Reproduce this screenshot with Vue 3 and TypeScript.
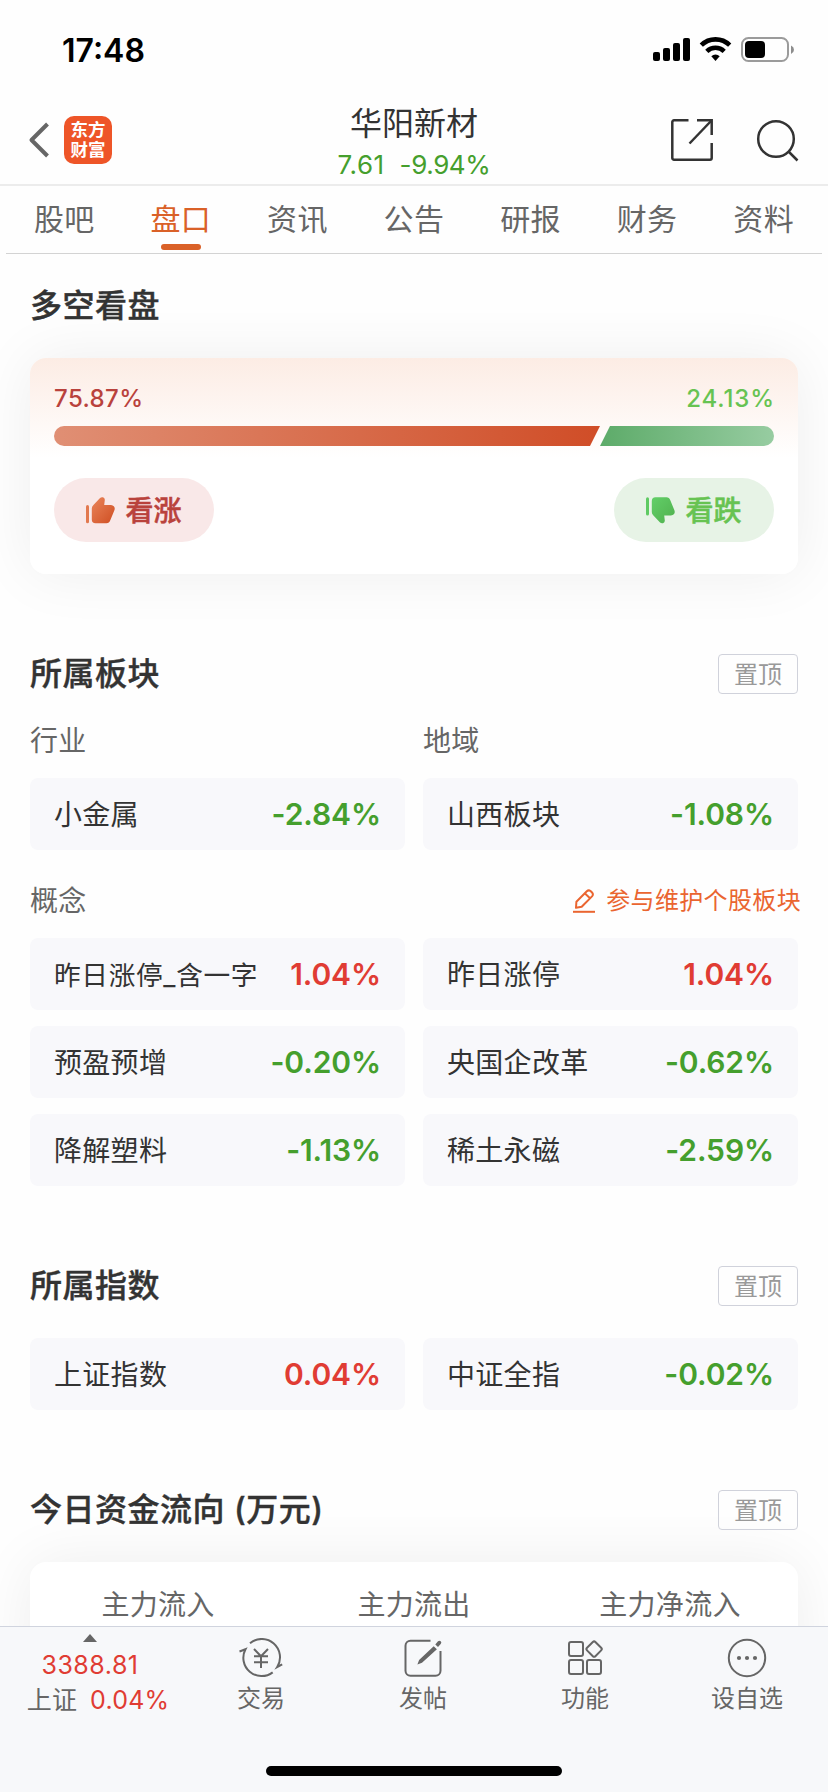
<script setup lang="ts">
import { ref } from 'vue'

interface Quote {
  name: string
  change: string
  small?: boolean
}

const tabs: string[] = ['股吧', '盘口', '资讯', '公告', '研报', '财务', '资料']
const activeTab = ref('盘口')

const industry: Quote[] = [
  { name: '小金属', change: '-2.84%' },
  { name: '山西板块', change: '-1.08%' },
]
const concepts: Quote[] = [
  { name: '昨日涨停_含一字', change: '1.04%', small: true },
  { name: '昨日涨停', change: '1.04%' },
  { name: '预盈预增', change: '-0.20%' },
  { name: '央国企改革', change: '-0.62%' },
  { name: '降解塑料', change: '-1.13%' },
  { name: '稀土永磁', change: '-2.59%' },
]
const indices: Quote[] = [
  { name: '上证指数', change: '0.04%' },
  { name: '中证全指', change: '-0.02%' },
]
const flows: string[] = ['主力流入', '主力流出', '主力净流入']

const tone = (change: string): string => (change.startsWith('-') ? 'down' : 'up')
</script>

<template>
  <div class="screen">
    <div class="status">
      <span class="time">17:48</span>
      <svg class="status-icons" width="144" height="28" viewBox="652 36 144 28">
        <rect x="653" y="52" width="7" height="9" rx="2" />
        <rect x="663" y="48" width="7" height="13" rx="2" />
        <rect x="673" y="43" width="7" height="18" rx="2" />
        <rect x="683" y="38" width="7" height="23" rx="2" />
        <g fill="none" stroke="#000" stroke-width="4.6">
          <path d="M701.3 45.2a20.3 20.3 0 0 1 28.4 0" />
          <path d="M706.8 51.3a12.6 12.6 0 0 1 17.4 0" />
        </g>
        <path d="M711.3 56.2a6.2 6.2 0 0 1 8.4 0l-4.2 4.9z" />
        <rect x="742" y="38" width="46" height="23" rx="6.5" fill="none" stroke="#9b9b9b" stroke-width="2" />
        <rect x="745" y="41" width="20" height="17" rx="4" />
        <path d="M791 45.5q3 1.500 3 4.200t-3 4.200z" fill="#8d8d8d" />
      </svg>
    </div>

    <header class="nav">
      <div class="nav-side">
        <svg width="22" height="38" viewBox="0 0 22 38" fill="none" stroke="#666" stroke-width="4">
          <path d="M19.500 3L3.500 19l16 16" stroke-linejoin="round" />
        </svg>
        <div class="logo"><span>东方</span><span>财富</span></div>
      </div>
      <div class="nav-title">
        <div class="stock">华阳新材</div>
        <div class="price"><span>7.61</span><span class="price-change">-9.94%</span></div>
      </div>
      <div class="nav-side nav-right">
        <svg width="44" height="44" viewBox="0 0 44 44" fill="none" stroke="#333" stroke-width="2.500">
          <path d="M18.500 2.300H4a1.700 1.700 0 0 0-1.700 1.700v36A1.700 1.700 0 0 0 4 41.700h36a1.700 1.700 0 0 0 1.700-1.700V25M27 2.300h14.700V17" />
          <path d="M19.500 25.500L41.500 2.500" />
        </svg>
        <svg width="44" height="44" viewBox="0 0 44 44" fill="none" stroke="#333" stroke-width="2.500">
          <circle cx="21" cy="21" r="17.800" />
          <path d="M33.500 33.500l9 9" />
        </svg>
      </div>
    </header>

    <nav class="tabs">
      <button
        v-for="tab in tabs"
        :key="tab"
        class="tab"
        :class="{ active: tab === activeTab }"
        @click="activeTab = tab"
      >
        {{ tab }}
      </button>
    </nav>

    <main class="content">
      <section class="sentiment">
        <h2>多空看盘</h2>
        <div class="card vote">
          <div class="row shares">
            <span class="bull">75.87%</span>
            <span class="bear">24.13%</span>
          </div>
          <div class="bar"><i class="bar-bull"></i><i class="bar-bear"></i></div>
          <div class="row">
            <button class="pill pill-bull">
              <svg width="29" height="27" viewBox="0 0 29 27">
                <defs>
                  <linearGradient id="gUp" x1="0" y1="0" x2="1" y2="1">
                    <stop offset="0" stop-color="#ea855b" /><stop offset="1" stop-color="#cf4e22" />
                  </linearGradient>
                </defs>
                <rect x="0" y="8" width="3" height="18.300" rx="1.500" fill="#e2794f" />
                <path d="M5.800 11.500Q5.800 9.600 7.200 8.200L13.800 1.300Q15.200-.2 17 .3 19 1 18.800 3L18.200 8H25Q30 9 28.300 13.500L24.400 23Q23.200 26.300 20.500 26.300H9.500Q5.800 26.300 5.800 22.500Z" fill="url(#gUp)" />
              </svg>
              <span>看涨</span>
            </button>
            <button class="pill pill-bear">
              <svg width="29" height="27" viewBox="0 0 29 27">
                <defs>
                  <linearGradient id="gDown" x1="0" y1="1" x2="1" y2="0">
                    <stop offset="0" stop-color="#62cf68" /><stop offset="1" stop-color="#50b04e" />
                  </linearGradient>
                </defs>
                <g transform="matrix(1 0 0 -1 0 26.500)">
                  <rect x="0" y="8" width="3" height="18.300" rx="1.500" fill="#5fca63" />
                  <path d="M5.800 11.500Q5.800 9.600 7.200 8.200L13.800 1.300Q15.200-.2 17 .3 19 1 18.800 3L18.200 8H25Q30 9 28.300 13.500L24.400 23Q23.200 26.300 20.500 26.300H9.500Q5.800 26.300 5.800 22.500Z" fill="url(#gDown)" />
                </g>
              </svg>
              <span>看跌</span>
            </button>
          </div>
        </div>
      </section>

      <section class="boards">
        <div class="row head">
          <h2>所属板块</h2>
          <button class="pin">置顶</button>
        </div>
        <div class="grid labels">
          <span>行业</span>
          <span>地域</span>
        </div>
        <div class="grid">
          <div v-for="q in industry" :key="q.name" class="quote">
            <span class="name">{{ q.name }}</span>
            <span class="change" :class="tone(q.change)">{{ q.change }}</span>
          </div>
        </div>
        <div class="row labels concept-head">
          <span>概念</span>
          <a class="edit">
            <svg width="22" height="24" viewBox="0 0 22 24" fill="none" stroke="#ea6530" stroke-width="2">
              <path d="M0 22.800h22" />
              <path d="M3 18.800L3.400 12.800 13.800 2.300Q15.600.600 17.500 2L19.300 3.800Q20.600 5.600 19 7.400L8.700 17.800Z" stroke-linejoin="round" />
              <path d="M12 4.400l5.300 5" />
            </svg>
            <span>参与维护个股板块</span>
          </a>
        </div>
        <div class="grid">
          <div v-for="q in concepts" :key="q.name" class="quote">
            <span class="name" :class="{ small: q.small }">{{ q.name }}</span>
            <span class="change" :class="tone(q.change)">{{ q.change }}</span>
          </div>
        </div>
      </section>

      <section class="indices">
        <div class="row head">
          <h2>所属指数</h2>
          <button class="pin">置顶</button>
        </div>
        <div class="grid">
          <div v-for="q in indices" :key="q.name" class="quote">
            <span class="name">{{ q.name }}</span>
            <span class="change" :class="tone(q.change)">{{ q.change }}</span>
          </div>
        </div>
      </section>

      <section class="flow">
        <div class="row head">
          <h2>今日资金流向 (万元)</h2>
          <button class="pin">置顶</button>
        </div>
        <div class="card flow-card">
          <span v-for="f in flows" :key="f">{{ f }}</span>
        </div>
      </section>
    </main>

    <footer class="dock">
      <div class="dock-row">
        <div class="market">
          <svg width="14" height="8" viewBox="0 0 14 8" fill="#666"><path d="M7 0l7 8H0z" /></svg>
          <span class="point">3388.81</span>
          <div class="market-line"><span>上证</span><b>0.04%</b></div>
        </div>
        <div class="dock-item">
          <svg width="48" height="40" viewBox="237 1638 48 40">
            <path d="M250 1643.200a18.300 18.300 0 0 1 27.200 23.800l5-2.700" />
            <path d="M272.700 1672.400a18.300 18.300 0 0 1-27.200-23.200l-6 2.300" />
            <path d="M254 1649l7 7.200 7-7.200M261 1656v12M254 1656.300h14M254 1662.300h14" />
          </svg>
          <span>交易</span>
        </div>
        <div class="dock-item">
          <svg width="40" height="40" viewBox="403 1638 40 40">
            <path d="M430.500 1640.800h-20a5 5 0 0 0-5 5v24.900a5 5 0 0 0 5 5h25a5 5 0 0 0 5-5V1651" />
            <path d="M433.700 1646.200l3.200 3-14.900 13.500-4.600 1.900 1.700-4.600zM435.300 1644.500l2.700-3.200q1.500-1.300 2.700 0 1.300 1.200 0 2.600l-2.700 3.200z" class="solid" />
          </svg>
          <span>发帖</span>
        </div>
        <div class="dock-item">
          <svg width="40" height="40" viewBox="565 1638 40 40">
            <rect x="569" y="1642" width="14" height="14" rx="2" />
            <rect x="569" y="1660" width="14" height="14" rx="2" />
            <rect x="587" y="1660" width="14" height="14" rx="2" />
            <rect x="588.200" y="1643.200" width="11.800" height="11.800" rx="1.800" transform="rotate(45 594.100 1649.100)" />
          </svg>
          <span>功能</span>
        </div>
        <div class="dock-item">
          <svg width="40" height="40" viewBox="727 1638 40 40">
            <circle cx="747" cy="1658" r="18.200" />
            <g class="solid"><circle cx="739" cy="1658" r="2.100" /><circle cx="747" cy="1658" r="2.100" /><circle cx="755" cy="1658" r="2.100" /></g>
          </svg>
          <span>设自选</span>
        </div>
      </div>
      <div class="home"></div>
    </footer>
  </div>
</template>

<style>
body {
  margin: 0;
  background: #fff;
}
</style>

<style scoped>
.screen {
  width: 828px;
  height: 1792px;
  display: flex;
  flex-direction: column;
  overflow: hidden;
  background: #fefefe;
  color: #333;
  font-family: Inter, 'Noto Sans CJK SC', sans-serif;
}
.screen * {
  box-sizing: border-box;
}
button {
  border: 0;
  padding: 0;
  background: none;
  font-family: inherit;
  color: inherit;
}
h2 {
  margin: 0;
  font-size: 32px;
  line-height: 40px;
  font-weight: 500;
  letter-spacing: 0.5px;
  -webkit-text-stroke: 0.4px #333;
}
.row {
  display: flex;
  justify-content: space-between;
  align-items: center;
}

.status {
  height: 100px;
  padding: 0 32px 0 62px;
  display: flex;
  justify-content: space-between;
  align-items: center;
}
.time {
  padding-top: 1px;
  font-size: 32px;
  line-height: 40px;
  font-weight: 600;
  color: #000;
}

.nav {
  height: 86px;
  flex: none;
  display: grid;
  grid-template-columns: 1fr auto 1fr;
  border-bottom: 2px solid #ececec;
}
.nav-side {
  display: flex;
  align-items: center;
  gap: 14px;
  padding: 0 0 4px 28px;
}
.nav-right {
  justify-content: flex-end;
  gap: 41px;
  padding: 0 29px 4px 0;
}
.logo {
  width: 48px;
  height: 48px;
  border-radius: 10px;
  background: #ee5528;
  color: #fff;
  font-size: 17.5px;
  font-weight: 700;
  line-height: 20px;
  display: flex;
  flex-direction: column;
  align-items: center;
  justify-content: center;
}
.nav-title {
  display: flex;
  flex-direction: column;
  align-items: center;
}
.stock {
  margin-top: 2px;
  font-size: 32px;
  line-height: 43px;
}
.price {
  display: flex;
  gap: 15px;
  margin-top: 2px;
  font-size: 26px;
  line-height: 36px;
  letter-spacing: 0.5px;
  color: #459f2d;
}
.price-change {
  letter-spacing: -0.4px;
}

.tabs {
  flex: none;
  height: 68px;
  margin: 0 6px;
  display: grid;
  grid-template-columns: repeat(7, 1fr);
  border-bottom: 1px solid #d3d3d3;
}
.tab {
  display: flex;
  flex-direction: column;
  align-items: center;
  padding-top: 13px;
  font-size: 30px;
  line-height: 41px;
  letter-spacing: 0.4px;
  color: #666;
}
.tab.active {
  color: #da6128;
}
.tab.active::after {
  content: '';
  width: 40px;
  height: 6px;
  margin-top: 4px;
  border-radius: 3px;
  background: #da6128;
}

.content {
  flex: 1;
  min-height: 0;
  overflow: hidden;
  padding: 0 30px;
}
.card {
  border-radius: 16px;
  background: #fff;
  box-shadow: 0 0 60px rgba(0, 0, 0, 0.065);
}
.sentiment {
  padding-top: 32px;
}
.vote {
  margin-top: 32px;
  height: 216px;
  padding: 24px 24px 0;
  background: linear-gradient(#fcece4, #fff 100px);
}
.shares {
  height: 32px;
  margin-bottom: 12px;
  padding-top: 2px;
  font-size: 24px;
  line-height: 32px;
  font-weight: 550;
}
.bull {
  color: #b9423c;
  letter-spacing: 0.4px;
}
.bear {
  color: #67c352;
  letter-spacing: 0.9px;
  margin-right: -1px;
}
.bar {
  height: 20px;
  margin-bottom: 32px;
  display: flex;
  border-radius: 10px;
  overflow: hidden;
}
.bar-bull {
  flex: none;
  width: 546px;
  background: linear-gradient(90deg, #e08f74, #d04d27);
  clip-path: polygon(0 0, 100% 0, calc(100% - 10px) 100%, 0 100%);
}
.bar-bear {
  flex: 1;
  background: linear-gradient(90deg, #5dab69, #97cca1);
  clip-path: polygon(10px 0, 100% 0, 100% 100%, 0 100%);
}
.pill {
  width: 160px;
  height: 64px;
  border-radius: 32px;
  display: flex;
  align-items: center;
  justify-content: center;
  gap: 10px;
  font-size: 28px;
  line-height: 40px;
  font-weight: 500;
}
.pill span {
  padding-top: 1px;
  -webkit-text-stroke: 0.5px currentColor;
}
.pill-bull {
  background: #f9e8e8;
  color: #b9423c;
}
.pill-bear {
  background: #e7f3e6;
  color: #67c352;
}

.boards {
  padding-top: 80px;
}
.indices,
.flow {
  padding-top: 80px;
}
.head {
  height: 40px;
}
.pin {
  width: 80px;
  height: 40px;
  padding-top: 1px;
  border: 1px solid #d0d2db;
  border-radius: 4px;
  font-size: 24px;
  line-height: 37px;
  color: #999;
}
.labels {
  height: 84px;
  align-items: center;
  font-size: 28px;
  line-height: 40px;
  letter-spacing: 0.3px;
  color: #666;
}
.grid {
  display: grid;
  grid-template-columns: 1fr 1fr;
  gap: 16px 18px;
}
.grid.labels {
  padding-top: 10px;
}
.labels.concept-head {
  height: 88px;
  padding-top: 13px;
}
.concept-head {
  margin-right: -3px;
}
.edit {
  display: flex;
  align-items: center;
  gap: 11px;
  font-size: 24px;
  letter-spacing: 0.35px;
  color: #ea6530;
}
.quote {
  height: 72px;
  padding: 1px 24px 0;
  border-radius: 8px;
  background: #f8f8fb;
  display: flex;
  align-items: center;
  justify-content: space-between;
}
.name {
  font-size: 28px;
  line-height: 40px;
  letter-spacing: 0.3px;
}
.name.small {
  font-size: 26.7px;
  letter-spacing: 0.65px;
}
.change {
  margin-top: -1px;
  font-size: 30px;
  line-height: 40px;
  font-weight: 600;
  letter-spacing: -0.1px;
}
.up {
  color: #e03c33;
}
.down {
  color: #459f2d;
}
.indices .grid,
.flow-card {
  margin-top: 32px;
}
.flow-card {
  height: 220px;
  padding-top: 23px;
  display: grid;
  grid-template-columns: repeat(3, 1fr);
  justify-items: center;
  font-size: 28px;
  line-height: 40px;
  letter-spacing: 0.3px;
  color: #666;
}

.dock {
  position: relative;
  flex: none;
  height: 166px;
  border-top: 1px solid #d0d4de;
  background: #f7f8fa;
  display: flex;
  flex-direction: column;
  justify-content: space-between;
  align-items: center;
}
.dock-row {
  width: 100%;
  height: 100px;
  display: grid;
  grid-template-columns: 180px repeat(4, 162px);
  color: #666;
}
.market {
  display: flex;
  flex-direction: column;
  align-items: center;
  padding: 7px 0 0 0;
}
.point {
  margin-top: 6px;
  font-size: 25px;
  line-height: 34px;
  letter-spacing: 0.5px;
  color: #e03c33;
}
.market-line {
  display: flex;
  align-items: center;
  gap: 13px;
  padding-left: 16px;
  font-size: 25px;
  line-height: 36px;
  letter-spacing: 0.2px;
}
.market-line b {
  font-weight: 400;
  color: #e03c33;
}
.dock-item {
  display: flex;
  flex-direction: column;
  align-items: center;
  padding-top: 11px;
  font-size: 24px;
  line-height: 36px;
}
.dock-item span {
  margin-top: 3px;
}
.dock-item svg {
  fill: none;
  stroke: #666;
  stroke-width: 2;
}
.dock-item .solid {
  fill: #666;
  stroke: none;
}
.home {
  width: 296px;
  height: 10px;
  margin-bottom: 16px;
  border-radius: 5px;
  background: #000;
}
</style>
